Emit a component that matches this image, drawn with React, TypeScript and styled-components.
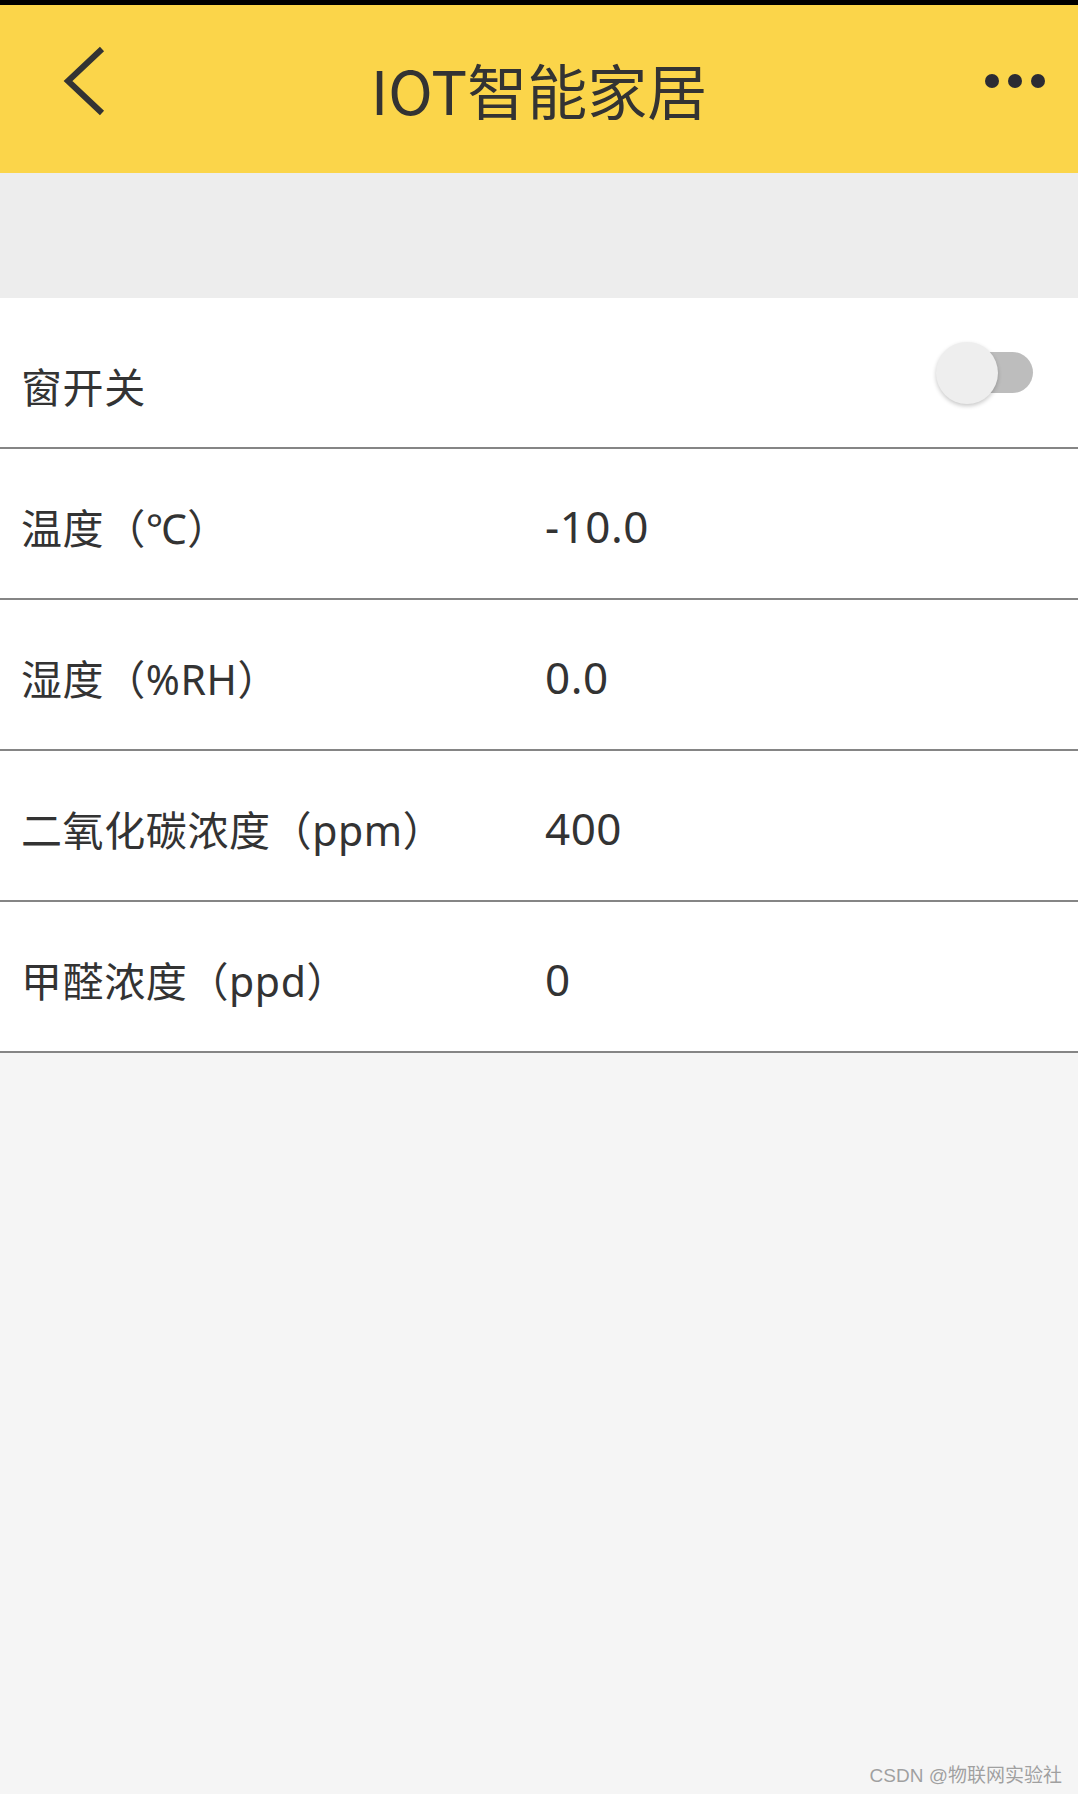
import styled, { createGlobalStyle } from 'styled-components';

const GlobalStyle = createGlobalStyle`
  html, body {
    margin: 0;
    padding: 0;
    background: #f5f5f5;
  }
  body {
    font-family: "Noto Sans", "Noto Sans CJK SC", sans-serif;
    color: #333;
  }
`;

const Page = styled.div`
  position: relative;
  min-height: 1794px;
  background: #f5f5f5;
`;

const StatusStrip = styled.div`
  height: 5px;
  background: #000;
`;

const Header = styled.header`
  height: 168px;
  background: #fbd54a;
  display: grid;
  grid-template-columns: 150px 1fr 150px;
  align-items: center;
`;

const BackButton = styled.div`
  display: flex;
  align-items: center;
  padding-left: 62px;
  padding-bottom: 16px;
`;

const Title = styled.h1`
  margin: 0;
  padding-bottom: 2px;
  text-align: center;
  font-family: "Noto Sans CJK SC", sans-serif;
  font-size: 60px;
  font-weight: 400;
  color: #333;
`;

const MoreButton = styled.div`
  display: flex;
  justify-content: flex-end;
  gap: 9px;
  padding-right: 33px;
  padding-bottom: 16px;
`;

const Dot = styled.span`
  width: 14px;
  height: 14px;
  border-radius: 50%;
  background: #2b2b33;
`;

const Band = styled.div`
  height: 125px;
  background: #ededed;
`;

const List = styled.ul`
  margin: 0;
  padding: 0;
  list-style: none;
  background: #fff;
`;

const Row = styled.li`
  height: 149px;
  display: flex;
  align-items: center;
  padding-left: 21px;
  border-bottom: 2px solid #858585;
  background: #fff;
`;

const Label = styled.span<{ $drop?: number }>`
  flex: 0 0 524px;
  font-family: "Noto Sans", "Noto Sans CJK SC", sans-serif;
  font-size: 41px;
  color: #333;
  letter-spacing: 0.6px;
  padding-top: ${(p) => p.$drop ?? 4}px;
  white-space: nowrap;
`;

const Value = styled.span`
  font-family: "Noto Sans", sans-serif;
  font-size: 44px;
  color: #333;
  letter-spacing: 0.5px;
  padding-top: 4px;
`;

const Switch = styled.div`
  margin-left: auto;
  margin-right: 45px;
  position: relative;
  width: 97px;
  height: 62px;
  display: flex;
  align-items: center;
`;

const Track = styled.div`
  margin-left: 12px;
  width: 85px;
  height: 41px;
  border-radius: 21px;
  background: #bdbdbd;
`;

const Knob = styled.div`
  position: absolute;
  left: 0;
  top: 0;
  width: 62px;
  height: 62px;
  border-radius: 50%;
  background: #eeeeee;
  box-shadow: 0 2px 4px rgba(0, 0, 0, 0.22);
`;

const Watermark = styled.div`
  position: absolute;
  right: 16px;
  bottom: 7px;
  font-family: "Liberation Sans", "Noto Sans CJK SC", sans-serif;
  font-size: 19px;
  color: #a0a0a0;
  text-shadow: 0 0 1px rgba(255, 255, 255, 0.8);
`;

const rows = [
  { label: '温度（℃）', value: '-10.0' },
  { label: '湿度（%RH）', value: '0.0' },
  { label: '二氧化碳浓度（ppm）', value: '400' },
  { label: '甲醛浓度（ppd）', value: '0' },
];

function App() {
  return (
    <Page>
      <GlobalStyle />
      <StatusStrip />
      <Header>
        <BackButton>
          <svg width="46" height="72" viewBox="0 0 46 72">
            <polyline
              points="40,4 6,36 40,68"
              fill="none"
              stroke="#333"
              strokeWidth="6"
              strokeLinecap="butt"
              strokeLinejoin="miter"
            />
          </svg>
        </BackButton>
        <Title>IOT智能家居</Title>
        <MoreButton>
          <Dot />
          <Dot />
          <Dot />
        </MoreButton>
      </Header>
      <Band />
      <List>
        <Row>
          <Label $drop={25}>窗开关</Label>
          <Switch>
            <Track />
            <Knob />
          </Switch>
        </Row>
        {rows.map((r) => (
          <Row key={r.label}>
            <Label>{r.label}</Label>
            <Value>{r.value}</Value>
          </Row>
        ))}
      </List>
      <Watermark>CSDN @物联网实验社</Watermark>
    </Page>
  );
}

export default App;
